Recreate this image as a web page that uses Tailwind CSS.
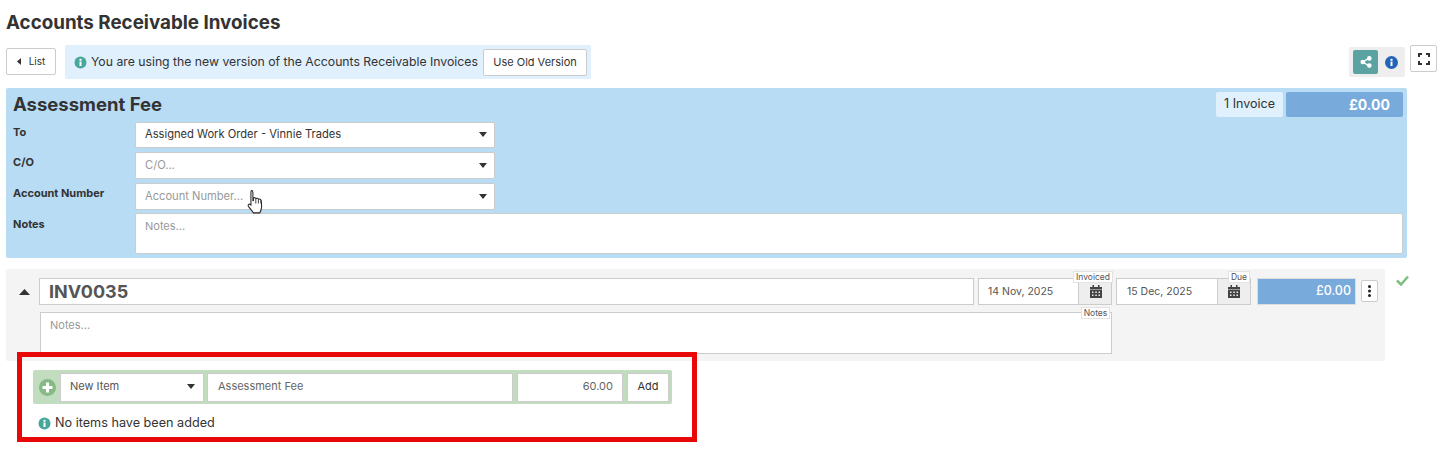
<!DOCTYPE html>
<html><head><meta charset="utf-8"><script src="https://cdn.jsdelivr.net/npm/@tailwindcss/browser@4"></script></head>
<body class="bg-white">
<div class="relative w-[1445px] h-[465px] overflow-hidden font-['Inter','Liberation_Sans',sans-serif] text-[#333]">
  <h1 class="h-[45px] pl-[6px] pt-[11px] text-[18.800px] leading-[24px] font-bold text-[#333]">Accounts Receivable Invoices</h1>

  <div class="flex h-[34px] pl-[6px] pr-[8px] items-start">
    <div class="mt-[3px] w-[50px] h-[27px] flex items-center justify-center gap-[8px] bg-white border border-[#ccc] rounded-[2px] text-[10px]">
      <svg width="4" height="7" viewBox="0 0 4 7"><path d="M4 0v7L0 3.500z" fill="#333"/></svg>List
    </div>
    <div class="ml-[9px] w-[526px] h-[34px] flex items-center bg-[#e0f0fd] rounded-[2px] pl-[9px] pr-[4px]">
      <svg width="13" height="13" viewBox="0 0 13 13"><circle cx="6.500" cy="6.500" r="6" fill="#47a79a"/><rect x="5.500" y="5.500" width="2" height="4.500" fill="#fff"/><rect x="5.500" y="2.800" width="2" height="2" fill="#fff"/></svg>
      <span class="ml-[4px] text-[12.240px] whitespace-nowrap">You are using the new version of the Accounts Receivable Invoices</span>
      <div class="ml-auto w-[104px] h-[27px] flex items-center justify-center bg-white border border-[#ccc] rounded-[2px] text-[11px]">Use Old Version</div>
    </div>
    <div class="ml-auto mt-[2px] w-[56px] h-[30px] flex items-center bg-[#eee] rounded-[2px] pl-[4px]">
      <div class="w-[25px] h-[24px] bg-[#5ba3a3] rounded-[2px] flex items-center justify-center">
        <svg width="12" height="12" viewBox="0 0 12 12"><path d="M9 2L3 6l6 4" stroke="#fff" stroke-width="1.500" fill="none"/><circle cx="9.300" cy="2.400" r="2.300" fill="#fff"/><circle cx="2.700" cy="6" r="2.300" fill="#fff"/><circle cx="9.300" cy="9.600" r="2.300" fill="#fff"/></svg>
      </div>
      <svg class="ml-[7px]" width="13" height="13" viewBox="0 0 13 13"><circle cx="6.500" cy="6.500" r="6.500" fill="#2264b8"/><rect x="5.500" y="5.500" width="2" height="4.500" fill="#fff"/><rect x="5.500" y="2.800" width="2" height="2" fill="#fff"/></svg>
    </div>
    <div class="ml-[5px] w-[27px] h-[27px] flex items-center justify-center bg-white border border-[#ccc] rounded-[2px]">
      <svg width="12" height="12" viewBox="0 0 12 12" fill="none" stroke="#333" stroke-width="2"><path d="M1 4V1h3M8 1h3v3M11 8v3H8M4 11H1V8"/></svg>
    </div>
  </div>

  <div class="mt-[9px] ml-[6px] w-[1401px] h-[170px] bg-[#b8dcf4] rounded-[2px] pl-[7px] pr-[4px] pt-[4px] flex flex-col">
    <div class="flex h-[25px] items-center">
      <div class="text-[18.500px] font-bold text-[#333]">Assessment Fee</div>
      <div class="ml-auto w-[67px] h-[25px] flex items-center justify-center bg-[#e0f0fd] rounded-[2px] text-[12.500px]">1 Invoice</div>
      <div class="ml-[3px] w-[117px] h-[25px] flex items-center justify-end pr-[13px] bg-[#78aadb] rounded-[2px] text-white text-[14px] font-bold">£0.00</div>
    </div>
    <div class="mt-[5px] flex h-[26px]">
      <div class="w-[122px] text-[11px] font-bold leading-[21px]">To</div>
      <div class="w-[360px] h-[26px] flex items-center justify-between bg-white border border-[#ccc] rounded-[2px] pl-[9px] pr-[7px] pb-[1px] text-[11.150px]">Assigned Work Order - Vinnie Trades<svg width="8" height="5" viewBox="0 0 8 5"><path d="M0 0h8L4 5z" fill="#333"/></svg></div>
    </div>
    <div class="mt-[4px] flex h-[27px]">
      <div class="w-[122px] text-[11px] font-bold leading-[20px]">C/O</div>
      <div class="w-[360px] h-[27px] flex items-center justify-between bg-white border border-[#ccc] rounded-[2px] pl-[9px] pr-[7px] pb-[1px] text-[11.150px] text-[#999]">C/O...<svg width="8" height="5" viewBox="0 0 8 5"><path d="M0 0h8L4 5z" fill="#333"/></svg></div>
    </div>
    <div class="mt-[4px] flex h-[27px]">
      <div class="w-[122px] text-[11px] font-bold leading-[20px]">Account Number</div>
      <div class="w-[360px] h-[27px] flex items-center justify-between bg-white border border-[#ccc] rounded-[2px] pl-[9px] pr-[7px] pb-[1px] text-[11.150px] text-[#999]">Account Number...<svg width="8" height="5" viewBox="0 0 8 5"><path d="M0 0h8L4 5z" fill="#333"/></svg></div>
    </div>
    <div class="mt-[3px] flex h-[41px]">
      <div class="w-[122px] text-[11px] font-bold leading-[22px]">Notes</div>
      <div class="flex-1 h-[41px] bg-white border border-[#ccc] rounded-[2px] pl-[9px] pt-[4px] text-[11px] leading-[16px] text-[#999]">Notes...</div>
    </div>
  </div>

  <div class="flex mt-[11px] ml-[6px]">
    <div class="w-[1379px] h-[92px] bg-[#f4f4f4] rounded-[2px] relative flex">
      <div class="w-[33px] pl-[13px] pt-[20px]"><svg width="11" height="6" viewBox="0 0 11 6"><path d="M0 6h11L5.500 0z" fill="#333"/></svg></div>
      <div class="flex-1 pt-[9px]">
        <div class="flex h-[27px]">
          <div class="w-[935px] h-[27px] flex items-center bg-white border border-[#ccc] pl-[9px] text-[18px] font-bold text-[#555]">INV0035</div>
          <div class="ml-[4px] w-[134px] h-[27px] flex relative">
            <div class="flex-1 flex items-center bg-white border border-[#ccc] pl-[9px] text-[10.500px] text-[#555]">14 Nov, 2025</div>
            <div class="w-[33px] pl-[2px] flex items-center justify-center bg-[#eee] border border-l-0 border-[#ccc]"><svg width="12" height="13" viewBox="0 0 12 13" fill="#444"><path d="M0 2h12v2.500H0zM2.500 0h1.500v2H2.500zM8 0h1.500v2H8zM0 5h12v8H0z"/><path d="M2 6.500h1.500V8H2zM5.300 6.500h1.500V8H5.300zM8.500 6.500H10V8H8.500zM2 9.500h1.500V11H2zM5.300 9.500h1.500V11H5.300zM8.500 9.500H10V11H8.500z" fill="#eee"/></svg></div>
            <div class="absolute right-[-1px] top-[-7px] w-[40px] h-[12px] flex items-center justify-center bg-white border border-[#e3e3e3] text-[8.500px] leading-[10px] text-[#555]">Invoiced</div>
          </div>
          <div class="ml-[4px] w-[135px] h-[27px] flex relative">
            <div class="flex-1 flex items-center bg-white border border-[#ccc] pl-[10px] text-[10.500px] text-[#555]">15 Dec, 2025</div>
            <div class="w-[33px] flex items-center justify-center bg-[#eee] border border-l-0 border-[#ccc]"><svg width="12" height="13" viewBox="0 0 12 13" fill="#444"><path d="M0 2h12v2.500H0zM2.500 0h1.500v2H2.500zM8 0h1.500v2H8zM0 5h12v8H0z"/><path d="M2 6.500h1.500V8H2zM5.300 6.500h1.500V8H5.300zM8.500 6.500H10V8H8.500zM2 9.500h1.500V11H2zM5.300 9.500h1.500V11H5.300zM8.500 9.500H10V11H8.500z" fill="#eee"/></svg></div>
            <div class="absolute left-[112px] top-[-7px] w-[22px] h-[12px] flex items-center justify-center bg-white border border-[#e3e3e3] text-[8.500px] leading-[10px] text-[#555]">Due</div>
          </div>
          <div class="ml-[6px] w-[99px] h-[27px] flex items-center justify-end pr-[4px] bg-[#78aadb] border border-[#ddd] text-white text-[12.500px] font-medium">£0.00</div>
          <div class="ml-[5px] mt-[2px] w-[17px] h-[22px] flex items-center justify-center bg-white border border-[#ccc] rounded-[2px]"><svg width="3" height="12" viewBox="0 0 3 12" fill="#222"><circle cx="1.500" cy="1.500" r="1.500"/><circle cx="1.500" cy="6" r="1.500"/><circle cx="1.500" cy="10.500" r="1.500"/></svg></div>
        </div>
        <div class="relative ml-[1px] mt-[7px] w-[1072px] h-[42px] bg-white border border-[#ccc] pl-[9px] pt-[4px] text-[11px] leading-[16px] text-[#999]">Notes...
          <div class="absolute right-[1px] top-[-6px] w-[29px] h-[12px] flex items-center justify-center bg-white border border-[#e3e3e3] text-[8.500px] leading-[10px] text-[#555]">Notes</div>
        </div>
      </div>
    </div>
    <svg class="ml-[11px] mt-[6px]" width="13" height="11" viewBox="0 0 13 11"><path d="M1 5.500l4 4 7-8" fill="none" stroke="#7dbf80" stroke-width="2.500"/></svg>
  </div>

  <div class="mt-[9px] ml-[33px] w-[639px] h-[34px] flex items-center bg-[#c2dcc0] rounded-[2px] pl-[6px] pr-[3px]">
    <svg width="17" height="17" viewBox="0 0 17 17"><circle cx="8.500" cy="8.500" r="8.500" fill="#85b985"/><path d="M8.500 3.500v10M3.500 8.500h10" stroke="#fff" stroke-width="3"/></svg>
    <div class="ml-[4px] w-[144px] h-[29px] flex items-center justify-between bg-white border border-[#ccc] pl-[9px] pr-[8px] pb-[1px] text-[11px] text-[#555]">New Item<svg width="8" height="5" viewBox="0 0 8 5"><path d="M0 0h8L4 5z" fill="#333"/></svg></div>
    <div class="ml-[3px] w-[306px] h-[29px] flex items-center bg-white border border-[#ccc] pl-[10px] pb-[1px] text-[11px] text-[#666]">Assessment Fee</div>
    <div class="ml-[4px] w-[106px] h-[29px] flex items-center justify-end bg-white border border-[#ccc] pr-[9px] pb-[1px] text-[11px] text-[#666]">60.00</div>
    <div class="ml-[4px] w-[42px] h-[29px] flex items-center justify-center bg-white border border-[#ccc] pb-[1px] text-[11px]">Add</div>
  </div>
  <div class="mt-[10px] ml-[38px] h-[18px] flex items-center text-[12.650px]">
    <svg width="13" height="13" viewBox="0 0 13 13"><circle cx="6.500" cy="6.500" r="6" fill="#47a79a"/><rect x="5.500" y="5.500" width="2" height="4.500" fill="#fff"/><rect x="5.500" y="2.800" width="2" height="2" fill="#fff"/></svg>
    <span class="ml-[4px]">No items have been added</span>
  </div>

  <div class="absolute left-[17px] top-[352px] w-[680px] h-[90px] border-[5px] border-[#e80808] pointer-events-none"></div>
  <svg class="absolute left-[246px] top-[189px]" width="19" height="27" viewBox="0 0 17 26"><path d="M4.500 1.500c1 0 1.500.7 1.500 1.700v8l.5-.1V8.800c1-.8 2-.6 2.500.4.900-.6 1.900-.4 2.400.6 1-.4 2.300.2 2.600 1.500l.4 5c.1 2.600-.6 4.500-1.800 6.700H6.500c-1.200-2-3-3.800-4.800-6.300-.8-1.300.4-2.800 1.800-1.800l.6.600V3.200c0-1 .4-1.700.4-1.700z" fill="#fff" stroke="#222" stroke-width="1"/><path d="M8.800 9.500v4.500M11.300 10v4M13.700 11v3" stroke="#222" stroke-width=".8"/></svg>
</div>
</body></html>
